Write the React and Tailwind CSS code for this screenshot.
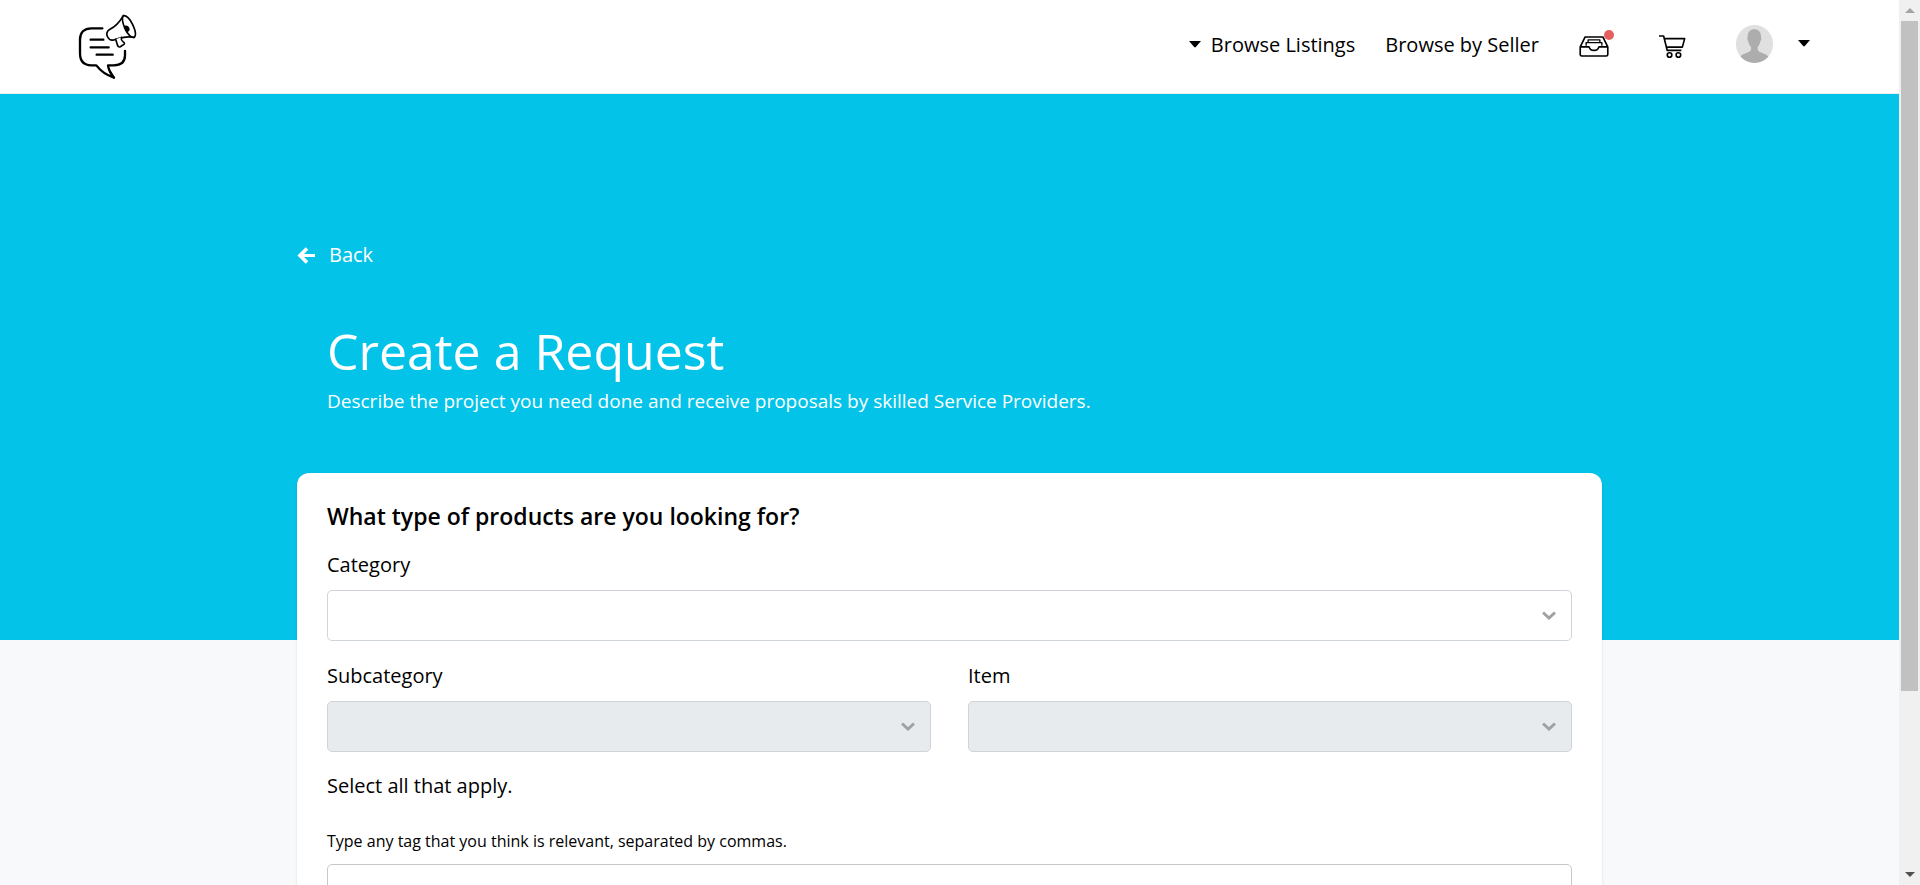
import React from "react";

function Caret({ className = "" }) {
  return (
    <svg viewBox="0 0 12 7" className={`h-[7px] w-[12px] ${className}`} aria-hidden="true">
      <path d="M0 0h12L6.800 6a1.100 1.100 0 0 1-1.600 0z" fill="#000" />
    </svg>
  );
}

function Logo() {
  return (
    <svg viewBox="54 36 180 204" className="h-[68px] w-[60px]" fill="none" stroke="#000" strokeLinecap="round" strokeLinejoin="round" aria-hidden="true">
      <path d="M127 85H94C72 85 60 98 60 119v41c0 23 12 36 34 36h15c12 16 30 29 53 37-10-11-16-23-18-37h17c24 0 34-12 34-30v-13" strokeWidth="7" />
      <path d="M150 214l12 19" strokeWidth="6" />
      <path d="M92 119h38M92 142h54M110 164h48" strokeWidth="7" />
      <path d="M190 47c-8 14-24 33-40 41-10 5-12 14-7 23 4 8 10 11 18 9 15-5 40-12 62-8" strokeWidth="5" />
      <path d="M190 47c8-2 20 9 28 27 8 17 10 33 5 38-8 3-20-8-28-26-7-17-10-33-5-39z" strokeWidth="5" />
      <path d="M194 79c7-3 13 3 13 9 0 5-4 7-8 5z" fill="#000" strokeWidth="4" />
      <path d="M167 118l6 19c2 5 8 5 11 1l8-5c3-3 0-6-3-8-4-3-6-7-5-13" fill="#fff" strokeWidth="5" />
    </svg>
  );
}

function InboxIcon() {
  return (
    <svg viewBox="0 0 90 64" className="h-[21px] w-[30px]" fill="none" stroke="#000" strokeWidth="5" strokeLinejoin="round" aria-hidden="true">
      <path d="M3 33 18 3h54l15 30v23q0 5-5 5H8q-5 0-5-5z" />
      <path d="M3 33h27c2 8 7 11 15 11s13-3 15-11h27" />
      <path d="M21 30V20h48v10M27 20v-8h36v8" strokeWidth="4" />
    </svg>
  );
}

function CartIcon() {
  return (
    <svg viewBox="0 0 82 70" className="h-[23px] w-[27px]" fill="none" stroke="#000" strokeWidth="5" strokeLinejoin="round" aria-hidden="true">
      <path d="M0 3h14l11 44h43M17 11h61l-7 26H24" />
      <circle cx="32" cy="61" r="7" />
      <circle cx="59" cy="61" r="7" />
    </svg>
  );
}

function Avatar() {
  return (
    <svg viewBox="0 0 111 114" className="h-[38px] w-[37px] rounded-full" aria-hidden="true">
      <rect width="111" height="114" fill="#e0e0e0" />
      <path d="M55 13c-13 0-21 9-20 24-2 1-1 9 2 12 1 8 4 13 8 17 1 9-1 13-7 15-9 4-21 6-27 17v20h88V98c-6-11-18-13-27-17-6-2-8-6-7-15 4-4 7-9 8-17 3-3 4-11 2-12 1-15-7-24-20-24z" fill="#adadad" />
    </svg>
  );
}

function SelectField({ id, label, disabled = false }) {
  return (
    <div className="flex min-w-0 flex-1 flex-col gap-[10px]">
      <label htmlFor={id} className="text-[20px] leading-[30px]">{label}</label>
      <div className="grid items-center">
        <select
          id={id}
          disabled={disabled}
          className="col-start-1 row-start-1 h-[51px] w-full appearance-none rounded-[5px] border border-[#ced4da] bg-white px-4 disabled:bg-[#e8ebee]"
        />
        <svg viewBox="0 0 14 9" className="pointer-events-none col-start-1 row-start-1 mr-4 h-[9px] w-[14px] justify-self-end" fill="none" stroke="#9ea2a6" strokeWidth="3" aria-hidden="true">
          <path d="m1 1.500 6 5.500 6-5.500" />
        </svg>
      </div>
    </div>
  );
}

function Header() {
  return (
    <header className="flex h-[94px] shrink-0 items-center justify-between border-b border-[#eeeeee] bg-white pr-[89px] pb-1 pl-[78px]">
      <a href="#home" aria-label="Home" className="pt-0.5"><Logo /></a>
      <nav className="flex items-center text-[20px] leading-[30px]">
        <a href="#listings" className="mr-[30px] flex items-center gap-[10px]"><Caret />Browse Listings</a>
        <a href="#sellers" className="mr-10">Browse by Seller</a>
        <a href="#inbox" aria-label="Inbox" className="relative mt-1 mr-[50px]">
          <InboxIcon />
          <span className="absolute -top-1.5 -right-[5px] size-[10px] rounded-full bg-[#e55f5f]" />
        </a>
        <a href="#cart" aria-label="Cart" className="mt-1 mr-[50px]"><CartIcon /></a>
        <button type="button" aria-label="Account" className="flex items-center gap-[25px] pb-0.5"><Avatar /><Caret /></button>
      </nav>
    </header>
  );
}

function ScrollRail() {
  return (
    <div className="flex w-[21px] shrink-0 flex-col items-center justify-between bg-[#f0f0f0]" aria-hidden="true">
      <div className="flex h-full w-full flex-col items-center">
        <div className="flex h-[21px] items-center"><svg viewBox="0 0 10 5" className="h-[5px] w-[10px]"><path d="M5 0 10 5H0z" fill="#a3a3a3" /></svg></div>
        <div className="h-31/40 w-[17px] bg-[#c1c1c1]" />
      </div>
      <div className="flex h-[21px] shrink-0 items-center"><svg viewBox="0 0 10 5" className="h-[5px] w-[10px]"><path d="M0 0h10L5 5z" fill="#505050" /></svg></div>
    </div>
  );
}

export default function App() {
  return (
    <div className="flex h-screen overflow-hidden bg-[#f8f9fb] font-['Open_Sans','Noto_Sans',sans-serif] text-black">
      <div className="flex min-w-0 flex-1 flex-col">
        <Header />
        <main>
          <section className="bg-[#03c3e9] pb-[167px] text-white">
            <div className="mx-auto max-w-[1305px] pt-[146px] pb-[57px]">
              <a href="#back" className="inline-flex items-center gap-[14px] text-[20px] leading-[30px]">
                <svg viewBox="0 0 18 17" className="h-[17px] w-[18px]" fill="none" stroke="#fff" aria-hidden="true">
                  <path d="M18 8.500H3" strokeWidth="3" />
                  <path d="M10 1.500 3 8.500l7 7" strokeWidth="3.600" />
                </svg>
                Back
              </a>
              <div className="px-[30px] pt-[46px]">
                <h1 className="text-[50px] leading-[70px]">Create a Request</h1>
                <p className="text-[19px] leading-[30px]">Describe the project you need done and receive proposals by skilled Service Providers.</p>
              </div>
            </div>
          </section>
          <form className="mx-auto -mt-[167px] flex max-w-[1305px] flex-col rounded-t-xl bg-white px-[30px] pt-[29px] pb-10 shadow-sm">
            <h2 className="mb-5 text-[23px] leading-7 font-semibold">What type of products are you looking for?</h2>
            <SelectField id="category" label="Category" />
            <div className="mt-5 flex gap-[37px]">
              <SelectField id="subcategory" label="Subcategory" disabled />
              <SelectField id="item" label="Item" disabled />
            </div>
            <p className="mt-[19px] text-[20px] leading-[30px]">Select all that apply.</p>
            <label htmlFor="tags" className="mt-7 mb-[11px] text-[16px] leading-6">Type any tag that you think is relevant, separated by commas.</label>
            <input id="tags" type="text" className="h-[50px] rounded-[5px] border border-[#c8c8c8] bg-white px-4" />
          </form>
        </main>
      </div>
      <ScrollRail />
    </div>
  );
}
